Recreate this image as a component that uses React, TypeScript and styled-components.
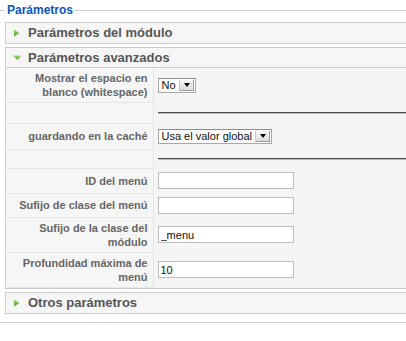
import { FC, ReactNode } from 'react'
import styled, { createGlobalStyle } from 'styled-components'

const GlobalStyle = createGlobalStyle`
  html, body {
    margin: 0;
    padding: 0;
    background: #fff;
    overflow: hidden;
  }
  body {
    font-family: 'Liberation Sans', Arial, Helvetica, sans-serif;
  }
`

// the box runs off both sides of the shot, so no side borders are drawn
const Fieldset = styled.fieldset`
  margin: 3px 0 0 0;
  padding: 4px 0 8px 5px;
  min-width: 0;
  border: 1px solid #ccc;
  border-left: 0;
  border-right: 0;
`

const Legend = styled.legend`
  padding: 0 2px;
  margin-left: 0;
  font: bold 12px/15px 'Liberation Sans', Arial, sans-serif;
  color: #0b55c4;
`

const Panel = styled.div`
  border: 1px solid #ccc;
  border-right: 0;
  background: #f5f5f5;
  margin-bottom: 3px;

  &:last-child {
    margin-bottom: 0;
  }
`

const Header = styled.div<{ $open?: boolean }>`
  display: flex;
  align-items: center;
  height: 20px;
  box-sizing: border-box;
  background: #f6f6f6;
  border-bottom: ${({ $open }) => ($open ? '1px solid #ccc' : '0')};
  cursor: pointer;
`

const Arrow = styled.svg`
  width: 10px;
  height: 10px;
  margin-left: 7px;
  flex-shrink: 0;
`

const Title = styled.span`
  margin-left: 5px;
  font: bold 13px/16px 'Liberation Sans', Arial, sans-serif;
  color: #555;
`

const ParamTable = styled.table`
  width: 100%;
  border-collapse: collapse;
  border-spacing: 0;
`

const Row = styled.tr<{ $h: number }>`
  height: ${({ $h }) => $h}px;
`

const KeyCell = styled.td`
  width: 147px;
  padding: 0 5px 0 0;
  box-sizing: border-box;
  text-align: right;
  vertical-align: middle;
  font: bold 11px/14px 'Liberation Sans', Arial, sans-serif;
  color: #666;
  background: #f6f6f6;
  border-right: 1px solid #e6e6e6;
  border-bottom: 1px solid #e6e6e6;
`

const ValueCell = styled.td`
  padding: 0 0 0 4px;
  vertical-align: middle;
`

const Rule = styled.div`
  height: 1px;
  background: #4a4a4a;
  box-shadow: 0 1px 0 #bbb;
`

const SelectBox = styled.div<{ $w: number }>`
  display: flex;
  align-items: stretch;
  width: ${({ $w }) => $w}px;
  height: 15px;
  box-sizing: border-box;
  border: 1px solid #a8a8a8;
  border-top-color: #8c8c8c;
  background: #fff;
`

const SelectText = styled.span`
  flex: 1;
  padding-left: 3px;
  font: 11px/13px 'Liberation Sans', Arial, sans-serif;
  color: #111;
  white-space: nowrap;
`

const SelectButton = styled.span`
  display: flex;
  align-items: center;
  justify-content: center;
  width: 14px;
  margin: 1px;
  background: linear-gradient(#f7f7f7, #d9d9d9);
  border-left: 1px solid #c8c8c8;
  box-shadow: inset -1px -1px 0 #9a9a9a;
`

const Caret = styled.span`
  width: 0;
  height: 0;
  border-left: 3px solid transparent;
  border-right: 3px solid transparent;
  border-top: 4px solid #000;
`

const TextInput = styled.input`
  display: block;
  width: 136px;
  height: 17px;
  margin: 0;
  padding: 0 2px;
  box-sizing: border-box;
  border: 1px solid #bdbdbd;
  background: #fff;
  font: 11px/15px 'Liberation Sans', Arial, sans-serif;
  color: #111;
  outline: none;
`

const GreenArrow: FC<{ open?: boolean; id: string }> = ({ open, id }) => (
  <Arrow viewBox="0 0 10 10">
    <defs>
      <linearGradient id={id} x1="0" y1="0" x2="0" y2="1">
        <stop offset="0" stopColor="#9ad86e" />
        <stop offset="1" stopColor="#4ea52d" />
      </linearGradient>
    </defs>
    {open ? (
      <polygon points="0,2.5 8.5,2.5 4.25,7" fill={`url(#${id})`} />
    ) : (
      <polygon points="1,1.5 6.5,5 1,8.5" fill={`url(#${id})`} />
    )}
  </Arrow>
)

const Slider: FC<{ title: string; open?: boolean; id: string; children?: ReactNode }> = ({
  title,
  open,
  id,
  children,
}) => (
  <Panel>
    <Header $open={open}>
      <GreenArrow open={open} id={id} />
      <Title>{title}</Title>
    </Header>
    {open && children}
  </Panel>
)

const FakeSelect: FC<{ value: string; width: number }> = ({ value, width }) => (
  <SelectBox $w={width}>
    <SelectText>{value}</SelectText>
    <SelectButton>
      <Caret />
    </SelectButton>
  </SelectBox>
)

export default function App() {
  return (
    <>
      <GlobalStyle />
      <Fieldset>
        <Legend>Parámetros</Legend>
        <Slider title="Parámetros del módulo" id="a1" />
        <Slider title="Parámetros avanzados" id="a2" open>
          <ParamTable>
            <tbody>
              <Row $h={34}>
                <KeyCell>
                  Mostrar el espacio en
                  <br />
                  blanco (whitespace)
                </KeyCell>
                <ValueCell>
                  <FakeSelect value="No" width={38} />
                </ValueCell>
              </Row>
              <Row $h={21}>
                <KeyCell />
                <ValueCell>
                  <Rule />
                </ValueCell>
              </Row>
              <Row $h={26}>
                <KeyCell>guardando en la caché</KeyCell>
                <ValueCell>
                  <FakeSelect value="Usa el valor global" width={114} />
                </ValueCell>
              </Row>
              <Row $h={19}>
                <KeyCell />
                <ValueCell>
                  <Rule />
                </ValueCell>
              </Row>
              <Row $h={25}>
                <KeyCell>ID del menú</KeyCell>
                <ValueCell>
                  <TextInput defaultValue="" />
                </ValueCell>
              </Row>
              <Row $h={24}>
                <KeyCell>Sufijo de clase del menú</KeyCell>
                <ValueCell>
                  <TextInput defaultValue="" />
                </ValueCell>
              </Row>
              <Row $h={35}>
                <KeyCell>
                  Sufijo de la clase del
                  <br />
                  módulo
                </KeyCell>
                <ValueCell>
                  <TextInput defaultValue="_menu" />
                </ValueCell>
              </Row>
              <Row $h={35}>
                <KeyCell>
                  Profundidad máxima de
                  <br />
                  menú
                </KeyCell>
                <ValueCell>
                  <TextInput defaultValue="10" />
                </ValueCell>
              </Row>
            </tbody>
          </ParamTable>
        </Slider>
        <Slider title="Otros parámetros" id="a3" />
      </Fieldset>
    </>
  )
}
